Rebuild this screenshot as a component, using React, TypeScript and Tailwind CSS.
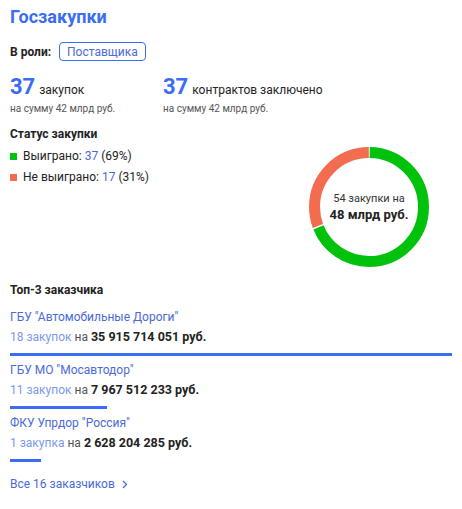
const customers = [
  { name: 'ГБУ "Автомобильные Дороги"', count: "18 закупок", sum: "35 915 714 051 руб.", pct: 100 },
  { name: 'ГБУ МО "Мосавтодор"', count: "11 закупок", sum: "7 967 512 233 руб.", pct: 22 },
  { name: 'ФКУ Упрдор "Россия"', count: "1 закупка", sum: "2 628 204 285 руб.", pct: 7 },
];

function Donut() {
  const r = 54.5;
  const c = 2 * Math.PI * r;
  const red = c * 0.31;
  const green = c * 0.69;
  const gap = 1.5;
  return (
    <div className="relative w-[122px] h-[122px]">
      <svg width="122" height="122" viewBox="0 0 122 122" className="-rotate-90">
        <circle cx="61" cy="61" r={r} fill="none" stroke="#00c20d" strokeWidth="11"
          strokeDasharray={`${green - gap} ${c}`} strokeDashoffset={-gap / 2} />
        <circle cx="61" cy="61" r={r} fill="none" stroke="#f26d50" strokeWidth="11"
          strokeDasharray={`${red - gap} ${c}`} strokeDashoffset={-(green + gap / 2)} />
      </svg>
      <div className="absolute inset-0 flex flex-col items-center justify-center">
        <span className="text-[11px] leading-[14px] text-[#333]">54 закупки на</span>
        <span className="text-[13px] leading-[17px] font-bold text-[#222]">48 млрд руб.</span>
      </div>
    </div>
  );
}

function App() {
  return (
    <main className="min-h-screen bg-white px-[10px] pt-[5px] text-[#222]" style={{ fontFamily: "Roboto, 'Noto Sans', sans-serif" }}>
      <h1 className="text-[18px] leading-[24px] font-bold text-[#3a6cf4]">Госзакупки</h1>

      <div className="mt-[13px] flex items-center gap-[8px]">
        <span className="text-[12px] font-bold">В роли:</span>
        <span className="border border-[#3a6cf4] rounded-[4px] px-[7px] h-[19px] flex items-center text-[12px] text-[#4a6ad8]">Поставщика</span>
      </div>

      <div className="mt-[15px] flex">
        <div className="w-[153px]">
          <div className="flex items-baseline gap-[4px]">
            <span className="text-[22px] leading-[22px] font-bold text-[#3a6cf4]">37</span>
            <span className="text-[12px]">закупок</span>
          </div>
          <div className="mt-[2px] text-[10px] text-[#555]">на сумму 42 млрд руб.</div>
        </div>
        <div>
          <div className="flex items-baseline gap-[4px]">
            <span className="text-[22px] leading-[22px] font-bold text-[#3a6cf4]">37</span>
            <span className="text-[12px]">контрактов заключено</span>
          </div>
          <div className="mt-[2px] text-[10px] text-[#555]">на сумму 42 млрд руб.</div>
        </div>
      </div>

      <div className="mt-[10px] flex justify-between">
        <div>
          <div className="text-[12px] leading-[16px] font-bold">Статус закупки</div>
          <div className="mt-[6px] flex items-center gap-[6px] text-[12px] leading-[16px]">
            <span className="w-[7px] h-[7px] bg-[#00c20d]" />
            <span>Выиграно: <span className="text-[#4a6ad8]">37</span> (69%)</span>
          </div>
          <div className="mt-[5px] flex items-center gap-[6px] text-[12px] leading-[16px]">
            <span className="w-[7px] h-[7px] bg-[#f26d50]" />
            <span>Не выиграно: <span className="text-[#4a6ad8]">17</span> (31%)</span>
          </div>
        </div>
        <div className="mt-[20px] mr-[22px]">
          <Donut />
        </div>
      </div>

      <div className="mt-[13px] text-[12px] font-bold">Топ-3 заказчика</div>

      <div className="mt-[8px] flex flex-col gap-[4px]">
        {customers.map((c) => (
          <div key={c.name}>
            <div className="text-[12px] leading-[20px] text-[#4a6ad8]">{c.name}</div>
            <div className="text-[12px] leading-[20px]">
              <span className="text-[#7b98ee]">{c.count}</span>{" "}
              <span className="text-[#555]">на</span>{" "}
              <span className="font-bold text-[12.5px]">{c.sum}</span>
            </div>
            <div className="mt-[6px] h-[3px] bg-[#3a6cf4]" style={{ width: `${c.pct}%` }} />
          </div>
        ))}
      </div>

      <div className="mt-[13px] flex items-center gap-[7px] text-[12px] text-[#4a6ad8]">
        <span>Все 16 заказчиков</span>
        <svg width="6" height="9" viewBox="0 0 6 9" fill="none" stroke="#4a6ad8" strokeWidth="1.3">
          <path d="M1 1l3.5 3.5L1 8" />
        </svg>
      </div>
    </main>
  );
}

export default App;
